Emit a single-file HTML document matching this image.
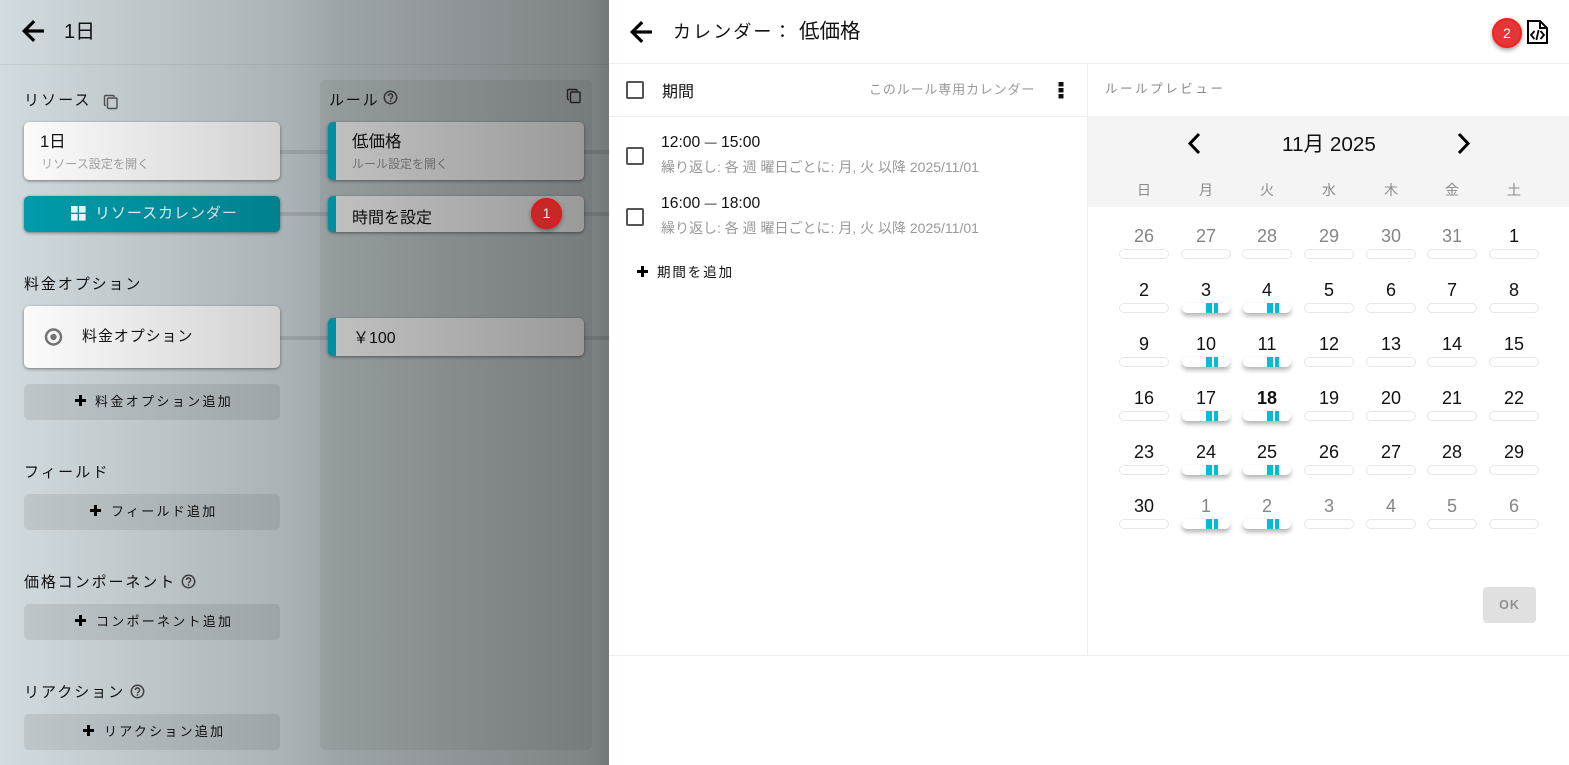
<!DOCTYPE html>
<html lang="ja"><head><meta charset="utf-8"><title>カレンダー</title>
<style>
*{box-sizing:border-box}
html,body{margin:0;padding:0;width:1569px;height:765px;overflow:hidden;background:#fff}
body{position:relative;font-family:"Liberation Sans","Noto Sans CJK JP",sans-serif;color:#111}
.a,.t,.n{position:absolute}
.t{white-space:nowrap;line-height:20px}
#left{position:absolute;left:0;top:0;width:609px;height:765px;background:#d2dbdf;overflow:hidden}
#shade{position:absolute;left:0;top:0;width:609px;height:765px;background:linear-gradient(90deg,rgba(0,0,0,0) 0,rgba(0,0,0,.19) 290px,rgba(0,0,0,.25) 340px,rgba(0,0,0,.40) 590px,rgba(0,0,0,.46) 609px)}
.card{position:absolute;background:#fff;border-radius:5px;box-shadow:0 1px 3px rgba(0,0,0,.45)}
.rule{border-left:8px solid #00bcd4}
.add{position:absolute;left:24px;width:256px;height:36px;border-radius:5px;background:rgba(0,0,0,.08)}
.ln{position:absolute;height:4px;background:rgba(0,0,0,.1)}
.lb{font-size:15px;letter-spacing:1.9px}
.ad{font-size:13px;letter-spacing:2.25px}
.sub{font-size:12px;color:#999}
.plus{position:absolute;width:11px;height:11px;background:linear-gradient(#000,#000) center/11px 3px no-repeat,linear-gradient(#000,#000) center/3px 11px no-repeat}
.hr{position:absolute;background:#eee}
.cb{position:absolute;width:18px;height:18px;border:2px solid #555;border-radius:2px;left:626px}
.n{width:50px;text-align:center;font-size:18px;line-height:22px;color:#111}
.g{color:#858585}
.p{position:absolute;width:50px;height:10px;border:1px solid #e6e6e6;border-radius:5px;background:#fff}
.q{position:absolute;width:48px;height:10px;border-radius:5px;background:#fff;box-shadow:0 3px 5px rgba(0,0,0,.3)}
.q:before,.q:after{content:"";position:absolute;top:0;height:10px;background:#00bcd4}
.q:before{left:24px;width:6px}
.q:after{left:32px;width:4px}
.w{position:absolute;width:50px;text-align:center;font-size:14px;line-height:20px;color:#8a8a8a;top:180px}
.d{font-size:12px;position:relative;top:-1px}
</style></head><body>
<div id="left">
<div class="a" style="left:320px;top:80px;width:272px;height:670px;border-radius:5px;background:rgba(0,0,0,.06)"></div>
<div class="hr" style="left:0;top:64px;width:609px;height:1px;background:rgba(0,0,0,.06)"></div>
<div class="ln" style="left:280px;top:150px;width:48px"></div>
<div class="ln" style="left:583px;top:150px;width:26px"></div>
<div class="ln" style="left:280px;top:212px;width:48px"></div>
<div class="ln" style="left:583px;top:212px;width:26px"></div>
<div class="ln" style="left:280px;top:336px;width:48px"></div>
<div class="ln" style="left:583px;top:336px;width:26px"></div>
<div class="card" style="left:24px;top:122px;width:256px;height:58px"></div>
<div class="card" style="left:24px;top:196px;width:256px;height:36px;background:#009dad"></div>
<div class="card" style="left:24px;top:306px;width:256px;height:62px"></div>
<div class="card rule" style="left:328px;top:122px;width:256px;height:58px"></div>
<div class="card rule" style="left:328px;top:196px;width:256px;height:36px"></div>
<div class="card rule" style="left:328px;top:318px;width:256px;height:38px"></div>
<div class="add" style="top:384px"></div>
<div class="add" style="top:494px"></div>
<div class="add" style="top:604px"></div>
<div class="add" style="top:714px"></div>
<span class="t" style="left:64px;top:22px;font-size:20px">1日</span>
<span class="t lb" style="left:24px;top:91px;letter-spacing:2.1px">リソース</span>
<span class="t lb" style="left:329px;top:91px;letter-spacing:1.8px">ルール</span>
<span class="t" style="left:40px;top:132px;font-size:16.5px">1日</span>
<span class="t sub" style="left:41px;top:154px;color:#aaa;letter-spacing:.1px">リソース設定を開く</span>
<span class="t" style="left:352px;top:132px;font-size:16.5px">低価格</span>
<span class="t sub" style="left:352px;top:154px">ルール設定を開く</span>
<span class="t" style="left:95px;top:204px;font-size:15px;letter-spacing:.95px;color:#fff">リソースカレンダー</span>
<svg class="a" style="left:70px;top:205px" width="17" height="17"><path fill="#fff" d="M1 1h6.600v6.600H1zM9 1h6.600v6.600H9zM1 9h6.600v6.600H1zM9 9h6.600v6.600H9z"/></svg>
<span class="t" style="left:352px;top:209px;font-size:16px">時間を設定</span>
<span class="t lb" style="left:24px;top:275px">料金オプション</span>
<svg class="a" style="left:44px;top:327px" width="19" height="20"><circle cx="9.500" cy="10" r="7.500" fill="none" stroke="#777" stroke-width="2.500"/><circle cx="9.500" cy="10" r="3.200" fill="#777"/></svg>
<span class="t" style="left:82px;top:327px;font-size:15px;letter-spacing:.9px">料金オプション</span>
<span class="t" style="left:353px;top:329px;font-size:16px">￥100</span>
<i class="plus" style="left:75px;top:395px"></i>
<span class="t ad" style="left:95px;top:392px;letter-spacing:2.35px">料金オプション追加</span>
<span class="t lb" style="left:24px;top:463px;letter-spacing:2.2px">フィールド</span>
<i class="plus" style="left:90px;top:505px"></i>
<span class="t ad" style="left:111px;top:502px">フィールド追加</span>
<span class="t lb" style="left:24px;top:573px;letter-spacing:1.9px">価格コンポーネント</span>
<i class="plus" style="left:75px;top:615px"></i>
<span class="t ad" style="left:96px;top:612px">コンポーネント追加</span>
<span class="t lb" style="left:24px;top:683px;letter-spacing:2px">リアクション</span>
<i class="plus" style="left:83px;top:725px"></i>
<span class="t ad" style="left:104px;top:722px">リアクション追加</span>
<svg class="a" style="left:103px;top:94px" width="16" height="16" fill="none" stroke="#555" stroke-width="1.400"><path d="M3 11.500H2.500a1 1 0 0 1-1-1V2.500a1 1 0 0 1 1-1H10a1 1 0 0 1 1 1V3"/><rect x="4.500" y="4" width="9.500" height="10.500" rx="1"/></svg>
<svg class="a" style="left:566px;top:88px" width="16" height="16" fill="none" stroke="#333" stroke-width="1.400"><path d="M3 11.500H2.500a1 1 0 0 1-1-1V2.500a1 1 0 0 1 1-1H10a1 1 0 0 1 1 1V3"/><rect x="4.500" y="4" width="9.500" height="10.500" rx="1"/></svg>
<svg class="a" style="left:383px;top:90px" width="15" height="15" viewBox="0 0 15 15"><circle cx="7.500" cy="7.500" r="6.200" fill="none" stroke="#444" stroke-width="1.500"/><path d="M5.400 6a2.100 2.100 0 1 1 3.300 1.700c-.8.5-1.200.9-1.200 1.700" fill="none" stroke="#444" stroke-width="1.500"/><circle cx="7.500" cy="11" r=".9" fill="#444"/></svg>
<svg class="a" style="left:181px;top:574px" width="15" height="15" viewBox="0 0 15 15"><circle cx="7.500" cy="7.500" r="6.200" fill="none" stroke="#444" stroke-width="1.500"/><path d="M5.400 6a2.100 2.100 0 1 1 3.300 1.700c-.8.5-1.200.9-1.200 1.700" fill="none" stroke="#444" stroke-width="1.500"/><circle cx="7.500" cy="11" r=".9" fill="#444"/></svg>
<svg class="a" style="left:130px;top:684px" width="15" height="15" viewBox="0 0 15 15"><circle cx="7.500" cy="7.500" r="6.200" fill="none" stroke="#444" stroke-width="1.500"/><path d="M5.400 6a2.100 2.100 0 1 1 3.300 1.700c-.8.5-1.200.9-1.200 1.700" fill="none" stroke="#444" stroke-width="1.500"/><circle cx="7.500" cy="11" r=".9" fill="#444"/></svg>
<svg class="a" style="left:16.500px;top:15px" width="32" height="32" viewBox="0 0 24 24"><path stroke="#000" stroke-width=".4" d="M20 11H7.830l5.590-5.590L12 4l-8 8 8 8 1.410-1.410L7.830 13H20v-2z"/></svg>
<div id="shade"></div>
<div class="a" style="left:531px;top:198px;width:31px;height:31px;border-radius:50%;background:#c62828;border:2px solid #e01818;box-shadow:0 2px 5px rgba(0,0,0,.4);color:#eee;font-size:14px;line-height:27px;text-align:center">1</div>
</div>

<div class="hr" style="left:609px;top:63px;width:960px;height:1px"></div>
<div class="hr" style="left:609px;top:116px;width:479px;height:1px"></div>
<div class="hr" style="left:1087px;top:64px;width:1px;height:592px"></div>
<div class="hr" style="left:609px;top:655px;width:960px;height:1px"></div>
<svg class="a" style="left:625px;top:16px" width="32" height="32" viewBox="0 0 24 24"><path stroke="#000" stroke-width=".4" d="M20 11H7.830l5.590-5.590L12 4l-8 8 8 8 1.410-1.410L7.830 13H20v-2z"/></svg>
<span class="t" style="left:673px;top:22px;font-size:18px;letter-spacing:2.100px">カレンダー：</span>
<span class="t" style="left:799px;top:22px;font-size:20.500px">低価格</span>
<div class="a" style="left:1492px;top:18px;width:30px;height:30px;border-radius:50%;background:#e53535;border:2px solid #f51f1f;box-shadow:0 2px 5px rgba(0,0,0,.4);color:#fff;font-size:14px;line-height:26px;text-align:center">2</div>
<svg class="a" style="left:1527px;top:20px" width="21" height="24" viewBox="0 0 21 24" fill="none" stroke="#000" stroke-width="2"><path d="M1 1h12l7 7v15H1zM13 1v7h7"/><path d="M7.500 11l-3.500 4 3.500 4M13.500 11l3.500 4-3.500 4M11.600 10l-2.200 10" stroke-width="1.800"/></svg>

<div class="cb" style="top:81px"></div>
<span class="t" style="left:662px;top:83px;font-size:16px">期間</span>
<span class="t" style="left:869px;top:80px;font-size:13px;letter-spacing:.85px;color:#999">このルール専用カレンダー</span>
<svg class="a" style="left:1056px;top:81px" width="10" height="18"><path d="M2.500 1h5v4.500h-5zM2.500 7h5v4.500h-5zM2.500 13h5v4.500h-5z" fill="#111"/></svg>
<span class="t" style="left:1105px;top:79px;font-size:12.500px;letter-spacing:2.550px;color:#888">ルールプレビュー</span>

<div class="cb" style="top:147px"></div>
<span class="t" style="left:661px;top:133px;font-size:15.700px">12:00 <span class="d">—</span> 15:00</span>
<span class="t" style="left:661px;top:157px;font-size:14px;color:#999">繰り返し: 各 週 曜日ごとに: 月, 火 以降 2025/11/01</span>
<div class="cb" style="top:208px"></div>
<span class="t" style="left:661px;top:194px;font-size:15.700px">16:00 <span class="d">—</span> 18:00</span>
<span class="t" style="left:661px;top:218px;font-size:14px;color:#999">繰り返し: 各 週 曜日ごとに: 月, 火 以降 2025/11/01</span>
<i class="plus" style="left:637px;top:266px"></i>
<span class="t" style="left:657px;top:263px;font-size:13.500px;letter-spacing:1.900px">期間を追加</span>

<div class="a" style="left:1088px;top:116px;width:481px;height:91px;background:#f4f4f4"></div>
<svg class="a" style="left:1185px;top:131px" width="20" height="24" fill="none" stroke="#000" stroke-width="3"><path d="M14 3L5 12.500l9 9.500"/></svg>
<svg class="a" style="left:1454px;top:131px" width="20" height="24" fill="none" stroke="#000" stroke-width="3"><path d="M5 3l9 9.500-9 9.500"/></svg>
<span class="t" style="left:1282px;top:135px;font-size:20.700px">11月 2025</span>
<span class="w" style="left:1119px">日</span><span class="w" style="left:1181px">月</span><span class="w" style="left:1242px">火</span><span class="w" style="left:1304px">水</span><span class="w" style="left:1366px">木</span><span class="w" style="left:1427px">金</span><span class="w" style="left:1489px">土</span>

<span class="n g" style="left:1119px;top:225px">26</span><span class="n g" style="left:1181px;top:225px">27</span><span class="n g" style="left:1242px;top:225px">28</span><span class="n g" style="left:1304px;top:225px">29</span><span class="n g" style="left:1366px;top:225px">30</span><span class="n g" style="left:1427px;top:225px">31</span><span class="n" style="left:1489px;top:225px">1</span>
<i class="p" style="left:1119px;top:249px"></i><i class="p" style="left:1181px;top:249px"></i><i class="p" style="left:1242px;top:249px"></i><i class="p" style="left:1304px;top:249px"></i><i class="p" style="left:1366px;top:249px"></i><i class="p" style="left:1427px;top:249px"></i><i class="p" style="left:1489px;top:249px"></i>

<span class="n" style="left:1119px;top:279px">2</span><span class="n" style="left:1181px;top:279px">3</span><span class="n" style="left:1242px;top:279px">4</span><span class="n" style="left:1304px;top:279px">5</span><span class="n" style="left:1366px;top:279px">6</span><span class="n" style="left:1427px;top:279px">7</span><span class="n" style="left:1489px;top:279px">8</span>
<i class="p" style="left:1119px;top:303px"></i><i class="q" style="left:1182px;top:303px"></i><i class="q" style="left:1243px;top:303px"></i><i class="p" style="left:1304px;top:303px"></i><i class="p" style="left:1366px;top:303px"></i><i class="p" style="left:1427px;top:303px"></i><i class="p" style="left:1489px;top:303px"></i>

<span class="n" style="left:1119px;top:333px">9</span><span class="n" style="left:1181px;top:333px">10</span><span class="n" style="left:1242px;top:333px">11</span><span class="n" style="left:1304px;top:333px">12</span><span class="n" style="left:1366px;top:333px">13</span><span class="n" style="left:1427px;top:333px">14</span><span class="n" style="left:1489px;top:333px">15</span>
<i class="p" style="left:1119px;top:357px"></i><i class="q" style="left:1182px;top:357px"></i><i class="q" style="left:1243px;top:357px"></i><i class="p" style="left:1304px;top:357px"></i><i class="p" style="left:1366px;top:357px"></i><i class="p" style="left:1427px;top:357px"></i><i class="p" style="left:1489px;top:357px"></i>

<span class="n" style="left:1119px;top:387px">16</span><span class="n" style="left:1181px;top:387px">17</span><span class="n" style="left:1242px;top:387px;font-weight:700">18</span><span class="n" style="left:1304px;top:387px">19</span><span class="n" style="left:1366px;top:387px">20</span><span class="n" style="left:1427px;top:387px">21</span><span class="n" style="left:1489px;top:387px">22</span>
<i class="p" style="left:1119px;top:411px"></i><i class="q" style="left:1182px;top:411px"></i><i class="q" style="left:1243px;top:411px"></i><i class="p" style="left:1304px;top:411px"></i><i class="p" style="left:1366px;top:411px"></i><i class="p" style="left:1427px;top:411px"></i><i class="p" style="left:1489px;top:411px"></i>

<span class="n" style="left:1119px;top:441px">23</span><span class="n" style="left:1181px;top:441px">24</span><span class="n" style="left:1242px;top:441px">25</span><span class="n" style="left:1304px;top:441px">26</span><span class="n" style="left:1366px;top:441px">27</span><span class="n" style="left:1427px;top:441px">28</span><span class="n" style="left:1489px;top:441px">29</span>
<i class="p" style="left:1119px;top:465px"></i><i class="q" style="left:1182px;top:465px"></i><i class="q" style="left:1243px;top:465px"></i><i class="p" style="left:1304px;top:465px"></i><i class="p" style="left:1366px;top:465px"></i><i class="p" style="left:1427px;top:465px"></i><i class="p" style="left:1489px;top:465px"></i>

<span class="n" style="left:1119px;top:495px">30</span><span class="n g" style="left:1181px;top:495px">1</span><span class="n g" style="left:1242px;top:495px">2</span><span class="n g" style="left:1304px;top:495px">3</span><span class="n g" style="left:1366px;top:495px">4</span><span class="n g" style="left:1427px;top:495px">5</span><span class="n g" style="left:1489px;top:495px">6</span>
<i class="p" style="left:1119px;top:519px"></i><i class="q" style="left:1182px;top:519px"></i><i class="q" style="left:1243px;top:519px"></i><i class="p" style="left:1304px;top:519px"></i><i class="p" style="left:1366px;top:519px"></i><i class="p" style="left:1427px;top:519px"></i><i class="p" style="left:1489px;top:519px"></i>

<div class="a" style="left:1483px;top:587px;width:53px;height:36px;border-radius:4px;background:#e0e0e0;color:#8f8f8f;font-size:12.500px;font-weight:700;letter-spacing:1px;line-height:36px;text-align:center">OK</div>
</body></html>
